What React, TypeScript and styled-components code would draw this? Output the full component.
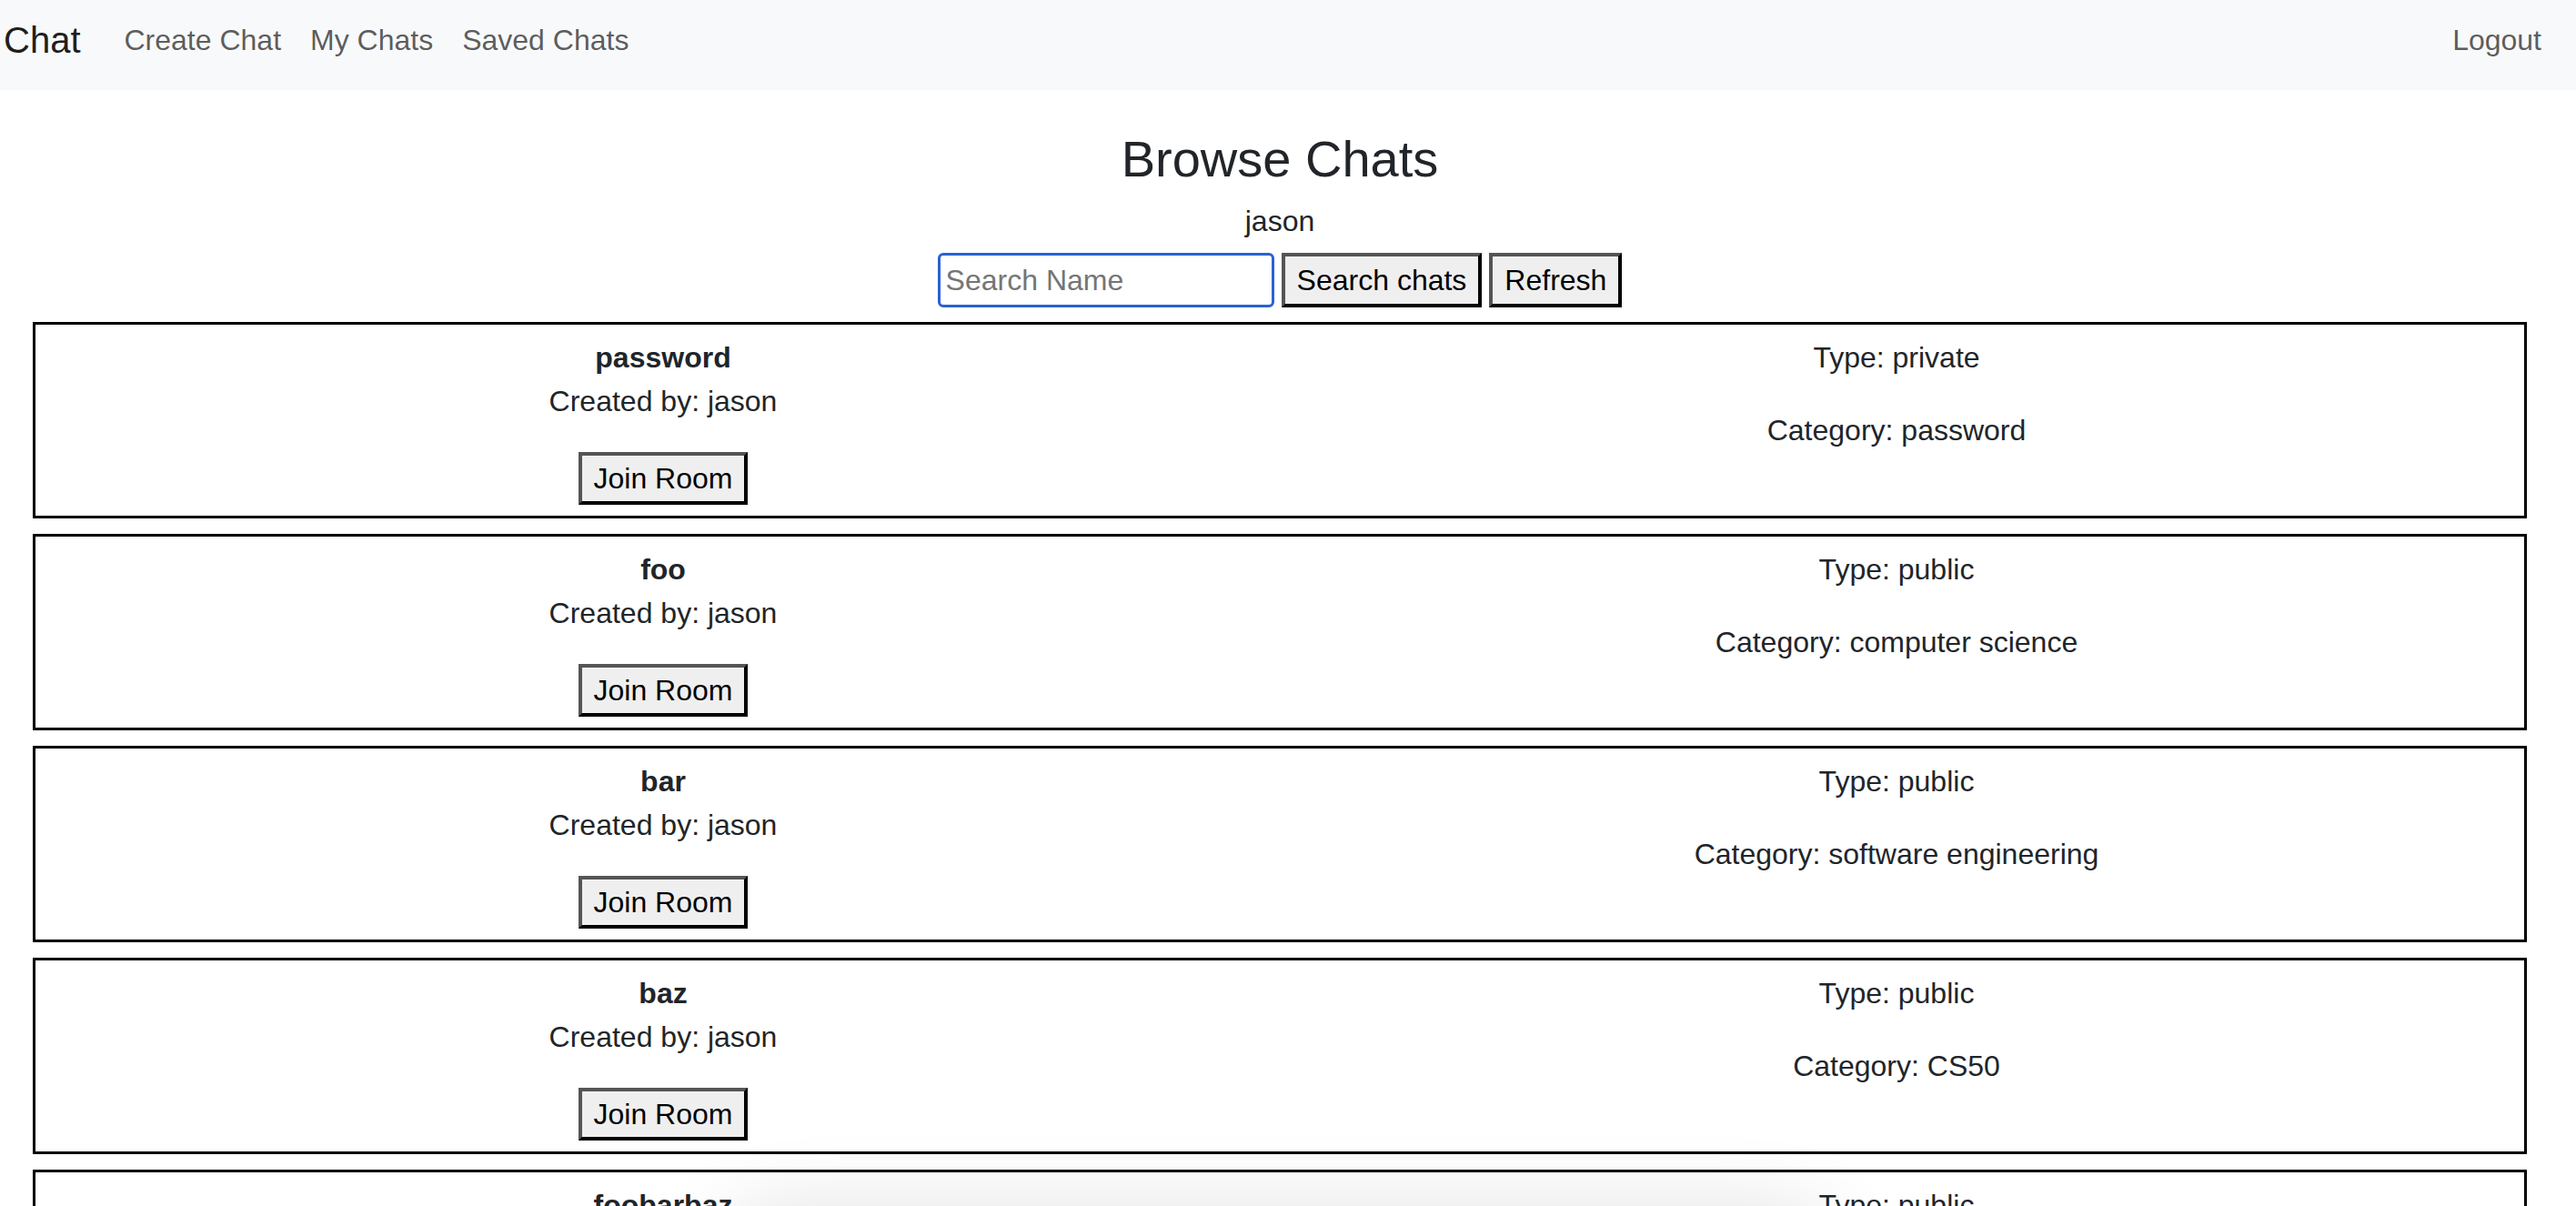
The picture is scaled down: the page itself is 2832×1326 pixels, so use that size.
import styled, { createGlobalStyle } from 'styled-components';

const GlobalStyle = createGlobalStyle`
	html, body {
		margin: 0;
		padding: 0;
		background: #fff;
		font-family: 'Liberation Sans', Arial, sans-serif;
		font-size: 32px;
		line-height: 1.5;
		color: #212529;
		overflow: hidden;
	}
`;

const Navbar = styled.nav`
	height: 99px;
	background: #f8f9fa;
	display: flex;
	align-items: center;
	padding: 0 22px 0 4px;
	box-sizing: border-box;
`;

const Brand = styled.a`
	font-size: 40px;
	line-height: 48px;
	color: rgba(0, 0, 0, 0.9);
	margin-right: 32px;
	padding-bottom: 12px;
	text-decoration: none;
`;

const NavLinks = styled.div`
	display: flex;
	flex: 1;
`;

const NavLink = styled.a`
	padding: 0 16px 12px;
	color: rgba(0, 0, 0, 0.65);
	line-height: 48px;
	text-decoration: none;
`;

const Main = styled.main`
	width: 2742px;
	margin-left: 36px;
	text-align: center;
`;

const Title = styled.h3`
	font-size: 56px;
	font-weight: 500;
	line-height: 1.2;
	margin: 42px 0 0;
`;

const User = styled.div`
	line-height: 48px;
	margin-top: 11px;
`;

const SearchBar = styled.div`
	display: flex;
	justify-content: center;
	gap: 8px;
	margin: 11px 0 16px;
`;

const SearchInput = styled.input`
	width: 370px;
	height: 60px;
	box-sizing: border-box;
	border: 3px solid #2a62d0;
	border-radius: 6px;
	padding: 0 6px;
	font-family: inherit;
	font-size: 32px;
	color: #000;
	outline: none;
	&::placeholder {
		color: #757575;
	}
`;

const Button = styled.button<{ $height?: number }>`
	height: ${(p) => p.$height ?? 60}px;
	box-sizing: border-box;
	padding: 0 13px;
	background: #efefef;
	border-width: 4px;
	border-style: solid;
	border-color: #555 #000 #000 #555;
	font-family: inherit;
	font-size: 32px;
	color: #000;
	cursor: pointer;
`;

const ChatCard = styled.div`
	border: 3px solid #000;
	padding: 12px;
	margin-bottom: 17px;
	display: grid;
	grid-template-columns: 1fr 1fr;
	align-items: start;
`;

const Column = styled.div`
	display: flex;
	flex-direction: column;
	align-items: center;
`;

const ChatName = styled.strong`
	line-height: 48px;
`;

const Para = styled.p`
	margin: 0 0 32px;
	line-height: 48px;
`;

const BottomShadow = styled.div`
	position: fixed;
	left: 820px;
	width: 1170px;
	top: 1360px;
	height: 200px;
	border-radius: 40px;
	box-shadow: 0 0 90px 30px rgba(0, 0, 0, 0.12);
	background: #fff;
`;

const chats = [
	{ name: 'password', type: 'private', category: 'password' },
	{ name: 'foo', type: 'public', category: 'computer science' },
	{ name: 'bar', type: 'public', category: 'software engineering' },
	{ name: 'baz', type: 'public', category: 'CS50' },
	{ name: 'foobarbaz', type: 'public', category: 'misc' },
];

function App() {
	return (
		<>
			<GlobalStyle />
			<Navbar>
				<Brand href="#">Chat</Brand>
				<NavLinks>
					<NavLink href="#">Create Chat</NavLink>
					<NavLink href="#">My Chats</NavLink>
					<NavLink href="#">Saved Chats</NavLink>
				</NavLinks>
				<NavLink href="#">Logout</NavLink>
			</Navbar>
			<Main>
				<Title>Browse Chats</Title>
				<User>jason</User>
				<SearchBar>
					<SearchInput placeholder="Search Name" />
					<Button>Search chats</Button>
					<Button>Refresh</Button>
				</SearchBar>
				{chats.map((chat) => (
					<ChatCard key={chat.name}>
						<Column>
							<ChatName>{chat.name}</ChatName>
							<Para>Created by: jason</Para>
							<Button $height={58}>Join Room</Button>
						</Column>
						<Column>
							<Para>Type: {chat.type}</Para>
							<Para>Category: {chat.category}</Para>
						</Column>
					</ChatCard>
				))}
			</Main>
			<BottomShadow />
		</>
	);
}

export default App;
